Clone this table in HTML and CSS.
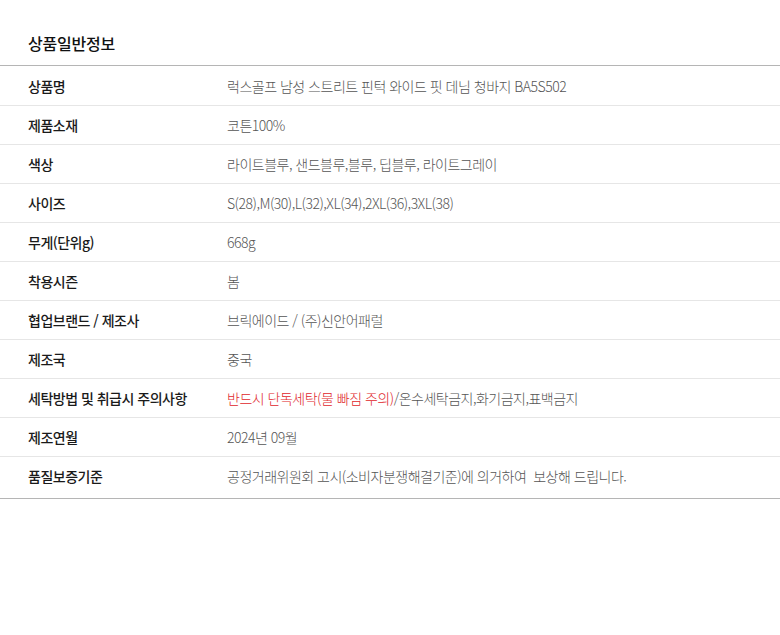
FILE: index.html
```html
<!DOCTYPE html>
<html lang="ko">
<head>
<meta charset="utf-8">
<link rel="stylesheet" href="styles.css">
</head>
<body>
<div class="info">
  <h2 class="title">상품일반정보</h2>
  <div class="table">
    <div class="row"><div class="label">상품명</div><div class="value">럭스골프 남성 스트리트 핀턱 와이드 핏 데님 청바지 BA5S502</div></div>
    <div class="row"><div class="label">제품소재</div><div class="value">코튼100%</div></div>
    <div class="row"><div class="label">색상</div><div class="value">라이트블루, 샌드블루,블루, 딥블루, 라이트그레이</div></div>
    <div class="row"><div class="label">사이즈</div><div class="value">S(28),M(30),L(32),XL(34),2XL(36),3XL(38)</div></div>
    <div class="row"><div class="label">무게(단위g)</div><div class="value">668g</div></div>
    <div class="row"><div class="label">착용시즌</div><div class="value">봄</div></div>
    <div class="row"><div class="label">협업브랜드 / 제조사</div><div class="value">브릭에이드 / (주)신안어패럴</div></div>
    <div class="row"><div class="label">제조국</div><div class="value">중국</div></div>
    <div class="row"><div class="label">세탁방법 및 취급시 주의사항</div><div class="value"><span class="warn">반드시 단독세탁(물 빠짐 주의)</span>/온수세탁금지,화기금지,표백금지</div></div>
    <div class="row"><div class="label">제조연월</div><div class="value">2024년 09월</div></div>
    <div class="row"><div class="label">품질보증기준</div><div class="value">공정거래위원회 고시(소비자분쟁해결기준)에 의거하여&nbsp; 보상해 드립니다.</div></div>
  </div>
</div>
</body>
</html>
```
FILE: styles.css
```css
html, body {
  margin: 0;
  padding: 0;
  background: #fff;
}
body {
  font-family: "Noto Sans CJK KR", "Noto Sans", sans-serif;
  color: #222;
}
.info {
  padding-top: 30px;
}
.title {
  margin: 0 0 0 28px;
  font-size: 16px;
  font-weight: 500;
  letter-spacing: -0.2px;
  line-height: 26px;
  height: 35px;
  color: #111;
}
.table {
  border-top: 1px solid #b5b5b5;
  border-bottom: 1px solid #b5b5b5;
  padding-bottom: 3px;
}
.row {
  display: flex;
  align-items: center;
  height: 38px;
  border-top: 1px solid #e6e6e6;
}
.row:first-child {
  border-top: 0;
  height: 39px;
}
.label {
  width: 199px;
  padding-left: 28px;
  font-size: 14px;
  font-weight: 500;
  letter-spacing: -0.5px;
  color: #1a1a1a;
}
.value {
  font-size: 14px;
  font-weight: 300;
  letter-spacing: -0.5px;
  color: #555;
}
.warn {
  color: #e0262b;
}
```
